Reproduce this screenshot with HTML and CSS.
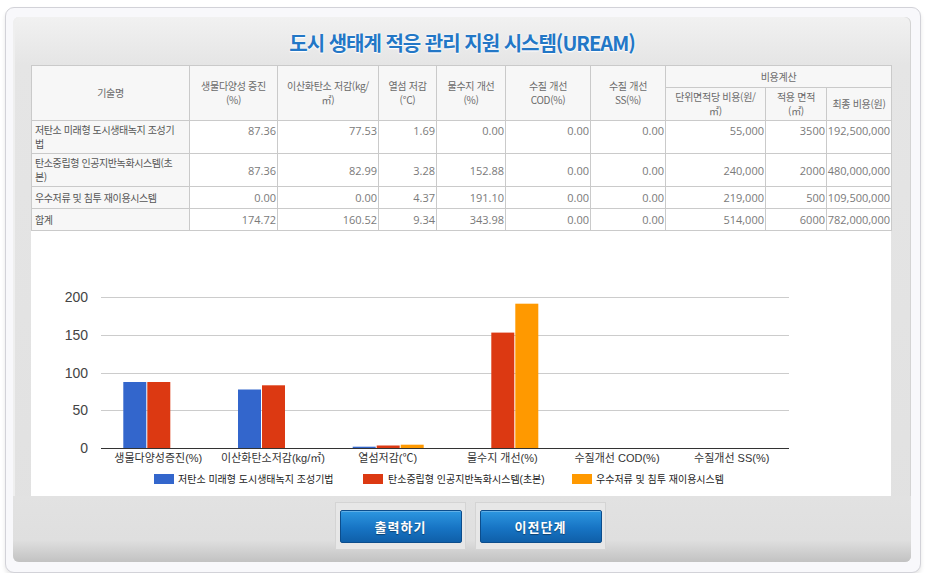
FILE: index.html
```html
<!DOCTYPE html>
<html lang="ko">
<head>
<meta charset="utf-8">
<title>UREAM</title>
<link rel="stylesheet" href="styles.css">
</head>
<body>
<div class="frame">
  <div class="panel">
    <h1 class="title">도시 생태계 적응 관리 지원 시스템(UREAM)</h1>
    <div class="content">
      <table class="grid">
        <colgroup>
          <col class="c1"><col class="c2"><col class="c3"><col class="c4"><col class="c5">
          <col class="c6"><col class="c7"><col class="c8"><col class="c9"><col class="c10">
        </colgroup>
        <thead>
          <tr class="hr1">
            <th rowspan="2">기술명</th>
            <th rowspan="2">생물다양성 증진<br>(%)</th>
            <th rowspan="2">이산화탄소 저감(kg/<br>㎡)</th>
            <th rowspan="2">열섬 저감<br>(℃)</th>
            <th rowspan="2">물수지 개선<br>(%)</th>
            <th rowspan="2">수질 개선<br>COD(%)</th>
            <th rowspan="2">수질 개선<br>SS(%)</th>
            <th colspan="3">비용계산</th>
          </tr>
          <tr class="hr2">
            <th>단위면적당 비용(원/<br>㎡)</th>
            <th>적용 면적<br>(㎡)</th>
            <th>최종 비용(원)</th>
          </tr>
        </thead>
        <tbody>
          <tr class="tall first">
            <td class="name">저탄소 미래형 도시생태녹지 조성기<br>법</td>
            <td>87.36</td><td>77.53</td><td>1.69</td><td>0.00</td><td>0.00</td><td>0.00</td><td>55,000</td><td>3500</td><td>192,500,000</td>
          </tr>
          <tr class="tall">
            <td class="name">탄소중립형 인공지반녹화시스템(초<br>본)</td>
            <td>87.36</td><td>82.99</td><td>3.28</td><td>152.88</td><td>0.00</td><td>0.00</td><td>240,000</td><td>2000</td><td>480,000,000</td>
          </tr>
          <tr class="short">
            <td class="name">우수저류 및 침투 재이용시스템</td>
            <td>0.00</td><td>0.00</td><td>4.37</td><td>191.10</td><td>0.00</td><td>0.00</td><td>219,000</td><td>500</td><td>109,500,000</td>
          </tr>
          <tr class="short">
            <td class="name">합계</td>
            <td>174.72</td><td>160.52</td><td>9.34</td><td>343.98</td><td>0.00</td><td>0.00</td><td>514,000</td><td>6000</td><td>782,000,000</td>
          </tr>
        </tbody>
      </table>
      <div class="chart">
        <svg width="860" height="265" viewBox="0 0 860 265" xmlns="http://www.w3.org/2000/svg">
          <g class="gridlines" stroke="#cccccc" stroke-width="1">
            <line x1="70" y1="66.5" x2="758" y2="66.5"/>
            <line x1="70" y1="104.5" x2="758" y2="104.5"/>
            <line x1="70" y1="142.5" x2="758" y2="142.5"/>
            <line x1="70" y1="179.5" x2="758" y2="179.5"/>
          </g>
          <g class="ylabels" font-size="14" fill="#444" text-anchor="end">
            <text x="57" y="71">200</text>
            <text x="57" y="109">150</text>
            <text x="57" y="147">100</text>
            <text x="57" y="184">50</text>
            <text x="57" y="222">0</text>
          </g>
          <g class="bars">
            <rect x="92.3" y="151" width="23" height="66" fill="#3366cc"/>
            <rect x="116.3" y="151" width="23" height="66" fill="#dc3912"/>
            <rect x="207" y="158.5" width="23" height="58.5" fill="#3366cc"/>
            <rect x="231" y="154.3" width="23" height="62.7" fill="#dc3912"/>
            <rect x="321.7" y="215.7" width="23" height="1.3" fill="#3366cc"/>
            <rect x="345.7" y="214.5" width="23" height="2.5" fill="#dc3912"/>
            <rect x="369.7" y="213.7" width="23" height="3.3" fill="#ff9900"/>
            <rect x="460.3" y="101.6" width="23" height="115.4" fill="#dc3912"/>
            <rect x="484.3" y="72.7" width="23" height="144.3" fill="#ff9900"/>
          </g>
          <line x1="70" y1="217.5" x2="758" y2="217.5" stroke="#333" stroke-width="1"/>
          <g class="xlabels" font-size="11" fill="#333" text-anchor="middle">
            <text x="127.3" y="231">생물다양성증진(%)</text>
            <text x="242" y="231">이산화탄소저감(kg/㎡)</text>
            <text x="356.7" y="231">열섬저감(℃)</text>
            <text x="471.3" y="231">물수지 개선(%)</text>
            <text x="586" y="231">수질개선 COD(%)</text>
            <text x="700.7" y="231">수질개선 SS(%)</text>
          </g>
          <g class="legend" font-size="10" fill="#222">
            <rect x="123" y="243" width="20" height="10" fill="#3366cc"/>
            <text x="147" y="252">저탄소 미래형 도시생태녹지 조성기법</text>
            <rect x="332" y="243" width="20" height="10" fill="#dc3912"/>
            <text x="357" y="252">탄소중립형 인공지반녹화시스템(초본)</text>
            <rect x="541" y="243" width="20" height="10" fill="#ff9900"/>
            <text x="565" y="252">우수저류 및 침투 재이용시스템</text>
          </g>
        </svg>
      </div>
    </div>
    <div class="actions">
      <span class="btn-wrap"><button class="btn" type="button">출력하기</button></span>
      <span class="btn-wrap"><button class="btn" type="button">이전단계</button></span>
    </div>
  </div>
</div>
</body>
</html>
```
FILE: styles.css
```css
body {
  margin: 0;
  background: #ffffff;
  font-family: "Noto Sans CJK KR", sans-serif;
}

.frame {
  margin: 7px 0 0 5px;
  width: 916px;
  height: 566px;
  box-sizing: border-box;
  border: 1px solid #d2d2d8;
  border-radius: 9px;
  background: #f8f8fb;
  padding: 9px 9px 10px 7px;
  box-shadow: 0 3px 4px rgba(0, 0, 0, 0.10);
}

.panel {
  height: 100%;
  border-radius: 6px;
  overflow: hidden;
  display: flex;
  flex-direction: column;
  background: linear-gradient(#f1f1f1 0, #e5e5e5 48px, #e1e1e1 100%);
  box-shadow: inset 2px 0 0 #efefef, inset -1px 0 0 #d4d4d4;
}

.title {
  margin: 0;
  height: 48px;
  box-sizing: border-box;
  padding-top: 3px;
  display: flex;
  align-items: center;
  justify-content: center;
  font-family: "Noto Sans CJK KR", sans-serif;
  font-size: 20px;
  font-weight: 700;
  letter-spacing: -1px;
  color: #2377c6;
  text-shadow: 0 0 3px #ffffff, 0 1px 1px #ffffff;
}

.content {
  margin: 0 20px 0 18px;
  background: #ffffff;
}

.grid {
  width: 860px;
  border-collapse: collapse;
  table-layout: fixed;
  font-family: "Open Sans", "Noto Sans CJK KR", sans-serif;
}

.c1 { width: 158px; }
.c2 { width: 88px; }
.c3 { width: 101px; }
.c4 { width: 58px; }
.c5 { width: 69px; }
.c6 { width: 85px; }
.c7 { width: 75px; }
.c8 { width: 100px; }
.c9 { width: 61px; }
.c10 { width: 65px; }

.grid th,
.grid td {
  border: 1px solid #cacaca;
  padding: 0;
  overflow: hidden;
  white-space: nowrap;
}

.grid th {
  background: #f7f7f7;
  font-family: "Noto Sans CJK KR", sans-serif;
  font-weight: 400;
  font-size: 10px;
  line-height: 14px;
  letter-spacing: -0.3px;
  color: #6a6a6a;
  text-align: center;
  vertical-align: middle;
}

.hr1 { height: 22px; }
.hr2 { height: 33px; }
.tall { height: 33px; }
.short { height: 22px; }

.grid td {
  background: #ffffff;
  font-size: 11px;
  line-height: 13px;
  color: #7a7a7a;
  text-align: right;
  padding-right: 1px;
  vertical-align: middle;
}

.grid .first td {
  vertical-align: top;
  padding-top: 3px;
}

.grid td.name {
  background: #f7f7f7;
  font-family: "Noto Sans CJK KR", sans-serif;
  font-size: 10px;
  line-height: 14px;
  letter-spacing: -0.4px;
  color: #555555;
  text-align: left;
  padding-left: 3px;
  vertical-align: middle;
  padding-top: 0;
}

.chart svg {
  display: block;
  font-family: "Liberation Sans", "Noto Sans CJK KR", sans-serif;
}

.actions {
  flex: 1;
  display: flex;
  justify-content: center;
  align-items: flex-start;
  gap: 9px;
  padding: 6px 0 0 16px;
  background: linear-gradient(#e2e2e2 0, #dfdfdf 44px, #c2c2c2 66px);
}

.btn-wrap {
  display: block;
  border: 1px solid #d4d4d4;
  background: #e7e7e7;
  padding: 7px 3px 6px 4px;
}

.btn {
  display: block;
  width: 122px;
  height: 33px;
  padding: 0;
  border: 1px solid #0c4d8c;
  border-radius: 2px;
  background: linear-gradient(#2d97e0, #1774c4 55%, #0f5fa9);
  box-shadow: inset 0 1px 0 rgba(255, 255, 255, 0.25);
  color: #ffffff;
  font-family: "Noto Sans CJK KR", sans-serif;
  font-size: 13px;
  font-weight: 700;
  letter-spacing: 1px;
  text-shadow: 0 1px 1px rgba(0, 0, 0, 0.4);
}
```
